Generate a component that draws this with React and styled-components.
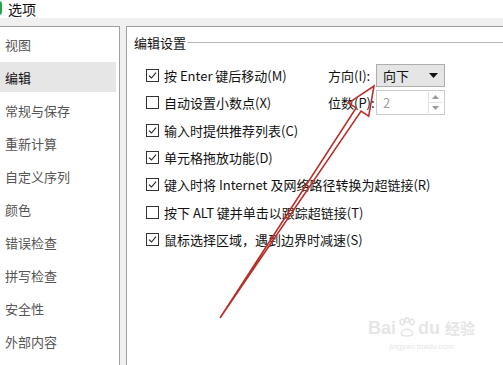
import styled, { createGlobalStyle } from "styled-components";

const GlobalStyle = createGlobalStyle`
  html, body { margin: 0; padding: 0; }
  body {
    width: 503px;
    height: 365px;
    overflow: hidden;
    font-family: "Noto Sans CJK SC", "Liberation Sans", sans-serif;
    background: #ffffff;
  }
`;

const Window = styled.div`
  position: relative;
  width: 503px;
  height: 365px;
  display: flex;
  flex-direction: column;
  overflow: hidden;
`;

const TitleBar = styled.div`
  height: 18px;
  display: flex;
  align-items: center;
  gap: 6px;
  background: #ffffff;
  font-size: 14px;
  line-height: 16px;
  color: #111;
`;

const AppIcon = styled.span`
  width: 13px;
  height: 14px;
  margin-left: -11px;
  margin-top: -2px;
  border-radius: 3px;
  background: #22a548;
`;

const TitleText = styled.span`
  margin-top: -1px;
`;

const Body = styled.div`
  flex: 1;
  display: flex;
  gap: 6px;
  padding-top: 8px;
  background: #f0f0f0;
`;

const Sidebar = styled.ul`
  list-style: none;
  margin: 0;
  padding: 2px 3px 0 0;
  width: 116px;
  background: #fff;
  border-top: 1px solid #a0a0a0;
  border-right: 1px solid #a0a0a0;
  display: flex;
  flex-direction: column;
  gap: 3px;
`;

const MenuItem = styled.li`
  height: 30px;
  display: flex;
  align-items: center;
  padding-left: 5px;
  font-size: 13px;
  color: ${(p) => (p.$active ? "#111" : "#555")};
  background: ${(p) => (p.$active ? "#e6e6e6" : "transparent")};
`;

const Panel = styled.div`
  flex: 1;
  background: #fff;
  border-top: 1px solid #a0a0a0;
  border-left: 1px solid #a0a0a0;
  padding: 6px 0 0 7px;
  display: flex;
  flex-direction: column;
`;

const GroupHeader = styled.div`
  display: flex;
  align-items: center;
  gap: 2px;
  height: 18px;
  font-size: 13px;
  color: #111;

  &::after {
    content: "";
    flex: 1;
    height: 1px;
    background: #b8b8b8;
    margin-top: 1px;
  }
`;

const Options = styled.div`
  display: flex;
  flex-direction: column;
  padding: 11px 0 0 12px;
`;

const Row = styled.div`
  height: 27.3px;
  display: flex;
  align-items: center;
`;

const CheckPart = styled.label`
  display: flex;
  align-items: center;
  gap: 5px;
  width: ${(p) => (p.$fixed ? "182px" : "auto")};
  font-size: 13px;
  color: #111;
  white-space: nowrap;
`;

const Box = styled.span`
  width: 11px;
  height: 11px;
  border: 1px solid #333;
  background: #fff;
  display: flex;
  align-items: center;
  justify-content: center;
  flex-shrink: 0;
`;

const FieldLabel = styled.span`
  width: 48px;
  font-size: 13px;
  color: #111;
`;

const Select = styled.div`
  width: 69px;
  height: 23px;
  border: 1px solid #adadad;
  background: #e5e5e5;
  display: flex;
  align-items: center;
  justify-content: space-between;
  padding: 0 6px 0 6px;
  box-sizing: border-box;
  font-size: 13px;
  color: #111;
`;

const Spin = styled.div`
  width: 69px;
  height: 25px;
  border: 1px solid #cccccc;
  box-sizing: border-box;
  display: flex;
  align-items: center;
  justify-content: space-between;
  padding-left: 6px;
  font-size: 13px;
  color: #a0a0a0;
`;

const SpinButtons = styled.div`
  width: 13px;
  height: 21px;
  margin-right: 2px;
  display: flex;
  flex-direction: column;
  border-left: 1px solid #e0e0e0;
`;

const SpinBtn = styled.div`
  flex: 1;
  display: flex;
  align-items: center;
  justify-content: center;
  border-bottom: ${(p) => (p.$top ? "1px solid #e0e0e0" : "none")};
`;

const Overlay = styled.svg`
  position: absolute;
  left: 0;
  top: 0;
  pointer-events: none;
`;

const Watermark = styled.div`
  position: absolute;
  right: 28px;
  bottom: 14px;
  display: flex;
  flex-direction: column;
  align-items: center;
  color: #e6e6e6;
  pointer-events: none;
`;

const MarkTop = styled.div`
  display: flex;
  align-items: flex-end;
  gap: 2px;
  font-family: "Liberation Sans", sans-serif;
  font-size: 18px;
  font-weight: 700;
  line-height: 18px;
`;

const MarkCn = styled.span`
  font-family: "Noto Sans CJK SC", sans-serif;
  font-size: 15px;
  margin-left: 3px;
`;

const MarkUrl = styled.div`
  font-family: "Liberation Sans", sans-serif;
  font-size: 8px;
  margin-top: 5px;
`;

const Check = () => (
  <svg width="9" height="9" viewBox="0 0 9 9">
    <path d="M1 4.6 L3.5 7 L8 1.6" fill="none" stroke="#222" strokeWidth="1.1" />
  </svg>
);

const menu = ["视图", "编辑", "常规与保存", "重新计算", "自定义序列", "颜色", "错误检查", "拼写检查", "安全性", "外部内容"];

const rest = [
  { text: "输入时提供推荐列表(C)", on: true },
  { text: "单元格拖放功能(D)", on: true },
  { text: "键入时将 Internet 及网络路径转换为超链接(R)", on: true },
  { text: "按下 ALT 键并单击以跟踪超链接(T)", on: false },
  { text: "鼠标选择区域，遇到边界时减速(S)", on: true },
];

function CheckOption({ text, on, fixed }) {
  return (
    <CheckPart $fixed={fixed}>
      <Box>{on && <Check />}</Box>
      {text}
    </CheckPart>
  );
}

export default function App() {
  return (
    <Window>
      <GlobalStyle />
      <TitleBar>
        <AppIcon />
        <TitleText>选项</TitleText>
      </TitleBar>
      <Body>
        <Sidebar>
          {menu.map((m) => (
            <MenuItem key={m} $active={m === "编辑"}>
              {m}
            </MenuItem>
          ))}
        </Sidebar>
        <Panel>
          <GroupHeader>编辑设置</GroupHeader>
          <Options>
            <Row>
              <CheckOption fixed on text="按 Enter 键后移动(M)" />
              <FieldLabel>方向(I):</FieldLabel>
              <Select>
                向下
                <svg width="9" height="5" viewBox="0 0 9 5">
                  <path d="M0 0 H9 L4.5 5 Z" fill="#111" />
                </svg>
              </Select>
            </Row>
            <Row>
              <CheckOption fixed on={false} text="自动设置小数点(X)" />
              <FieldLabel>位数(P):</FieldLabel>
              <Spin>
                2
                <SpinButtons>
                  <SpinBtn $top>
                    <svg width="7" height="4" viewBox="0 0 7 4">
                      <path d="M0 4 L3.5 0 L7 4 Z" fill="#9a9a9a" />
                    </svg>
                  </SpinBtn>
                  <SpinBtn>
                    <svg width="7" height="4" viewBox="0 0 7 4">
                      <path d="M0 0 L3.5 4 L7 0 Z" fill="#9a9a9a" />
                    </svg>
                  </SpinBtn>
                </SpinButtons>
              </Spin>
            </Row>
            {rest.map((r) => (
              <Row key={r.text}>
                <CheckOption on={r.on} text={r.text} />
              </Row>
            ))}
          </Options>
        </Panel>
      </Body>

      <Watermark>
        <MarkTop>
          <span>Bai</span>
          <svg width="18" height="20" viewBox="0 0 22 24">
            <g fill="none" stroke="#e6e6e6" strokeWidth="2">
              <ellipse cx="5" cy="6" rx="2.5" ry="3.5" />
              <ellipse cx="11" cy="3.5" rx="2.5" ry="3" />
              <ellipse cx="17" cy="6" rx="2.5" ry="3.5" />
              <path d="M4 20 C4 13 18 13 18 20 C18 24 4 24 4 20 Z" />
            </g>
          </svg>
          <span>du</span>
          <MarkCn>经验</MarkCn>
        </MarkTop>
        <MarkUrl>jingyan.baidu.com</MarkUrl>
      </Watermark>

      <Overlay width="503" height="365" viewBox="0 0 503 365">
        <path
          d="M220 318 L356.1 107.9 L348.5 102.9 L374 86 L368.7 116.1 L361.1 111.1 Z"
          fill="none"
          stroke="#b8312b"
          strokeWidth="1.6"
          strokeLinejoin="miter"
        />
      </Overlay>
    </Window>
  );
}
